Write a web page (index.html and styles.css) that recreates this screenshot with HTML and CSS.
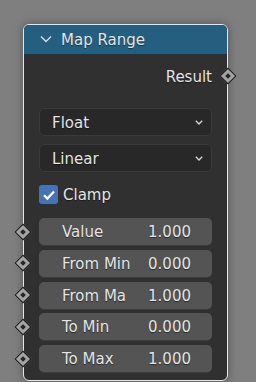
FILE: index.html
```html
<!DOCTYPE html>
<html lang="en">
<head>
    <meta charset="UTF-8">
    <meta name="viewport" content="width=device-width, initial-scale=1.0">
    <title>Map Range</title>
    <link rel="stylesheet" href="styles.css">
</head>
<body>

    <div class="node">
        <div class="node-header">
            <svg class="collapse" width="12" height="8" viewBox="0 0 12 8">
                <path d="M1 1.5 L6 6.5 L11 1.5" fill="none" stroke="#dcdcdc" stroke-width="1.4"/>
            </svg>
            <span>Map Range</span>
        </div>

        <div class="node-body">
            <div class="output-row">
                <span>Result</span>
                <span class="socket socket-out"></span>
            </div>

            <div class="dropdown dropdown-first">
                <span>Float</span>
                <svg width="8" height="5" viewBox="0 0 8 5">
                    <path d="M0.8 0.8 L4 4 L7.2 0.8" fill="none" stroke="#d8d8d8" stroke-width="1.3"/>
                </svg>
            </div>
            <div class="dropdown">
                <span>Linear</span>
                <svg width="8" height="5" viewBox="0 0 8 5">
                    <path d="M0.8 0.8 L4 4 L7.2 0.8" fill="none" stroke="#d8d8d8" stroke-width="1.3"/>
                </svg>
            </div>

            <div class="check-row">
                <span class="checkbox">
                    <svg width="14" height="12" viewBox="0 0 14 12">
                        <path d="M2 6.2 L5.4 9.6 L12 2.4" fill="none" stroke="#fff" stroke-width="2.2"/>
                    </svg>
                </span>
                <span>Clamp</span>
            </div>

            <div class="fields">
                <div class="field"><span class="socket socket-in"></span><span class="field-label">Value</span><span class="field-value">1.000</span></div>
                <div class="field"><span class="socket socket-in"></span><span class="field-label">From Min</span><span class="field-value">0.000</span></div>
                <div class="field"><span class="socket socket-in"></span><span class="field-label">From Ma</span><span class="field-value">1.000</span></div>
                <div class="field"><span class="socket socket-in"></span><span class="field-label">To Min</span><span class="field-value">0.000</span></div>
                <div class="field"><span class="socket socket-in"></span><span class="field-label">To Max</span><span class="field-value">1.000</span></div>
            </div>
        </div>
    </div>

</body>
</html>
```

FILE: styles.css
```css
body {
    margin: 0;
    padding: 0;
    background: #7f7f7f;
    font-family: "DejaVu Sans", sans-serif;
    font-size: 15px;
    color: #e4e4e4;
    height: 382px;
    overflow: hidden;
}

.node {
    box-sizing: border-box;
    width: 205px;
    height: 357px;
    margin: 24px 0 0 23px;
    border: 1px solid #e6e6e6;
    border-radius: 6px;
    background: #303030;
    box-shadow: 0 0 10px rgba(0, 0, 0, 0.35);
}

.node-header {
    display: flex;
    align-items: center;
    height: 29px;
    padding-left: 16px;
    background: #255f80;
    border-radius: 5px 5px 0 0;
    text-shadow: 0 1px 1px rgba(0, 0, 0, 0.5);
}

.node-header span {
    padding-top: 1px;
}

.collapse {
    margin-right: 9px;
    margin-top: -1px;
}

.node-body {
    display: flex;
    flex-direction: column;
    padding: 0 15px;
}

.output-row {
    position: relative;
    display: flex;
    justify-content: flex-end;
    align-items: center;
    height: 24px;
    margin-top: 11px;
    text-shadow: 0 1px 1px rgba(0, 0, 0, 0.5);
}

.socket {
    position: absolute;
    box-sizing: border-box;
    width: 12px;
    height: 12px;
    background: #a3a3a3;
    border: 1px solid #141414;
    transform: rotate(45deg);
}

.socket::after {
    content: "";
    position: absolute;
    left: 3px;
    top: 3px;
    width: 4px;
    height: 4px;
    background: #262626;
}

.socket-out {
    right: -22px;
    top: 5px;
}

.socket-in {
    left: -22px;
    top: 7.5px;
}

.dropdown {
    box-sizing: border-box;
    display: flex;
    justify-content: space-between;
    align-items: center;
    height: 28px;
    margin-top: 8px;
    padding: 1px 8px 0 12px;
    background: #282828;
    border: 1px solid #3a3a3a;
    border-radius: 5px;
    text-shadow: 0 1px 1px rgba(0, 0, 0, 0.5);
}

.dropdown-first {
    margin-top: 19px;
}

.check-row {
    display: flex;
    align-items: center;
    gap: 5px;
    height: 23px;
    margin-top: 11px;
    text-shadow: 0 1px 1px rgba(0, 0, 0, 0.5);
}

.fields {
    display: flex;
    flex-direction: column;
    gap: 4.75px;
    margin-top: 12px;
}

.checkbox {
    display: flex;
    align-items: center;
    justify-content: center;
    width: 19px;
    height: 19px;
    background: #4772b3;
    border-radius: 3px;
}

.field {
    position: relative;
    box-sizing: border-box;
    display: flex;
    justify-content: space-between;
    align-items: center;
    height: 27px;
    padding: 1px 21px 0 23px;
    background: #545454;
    border-radius: 5px;
    box-shadow: 0 1px 0 #3c3c3c;
    text-shadow: 0 1px 1px rgba(0, 0, 0, 0.5);
    white-space: nowrap;
}
```
